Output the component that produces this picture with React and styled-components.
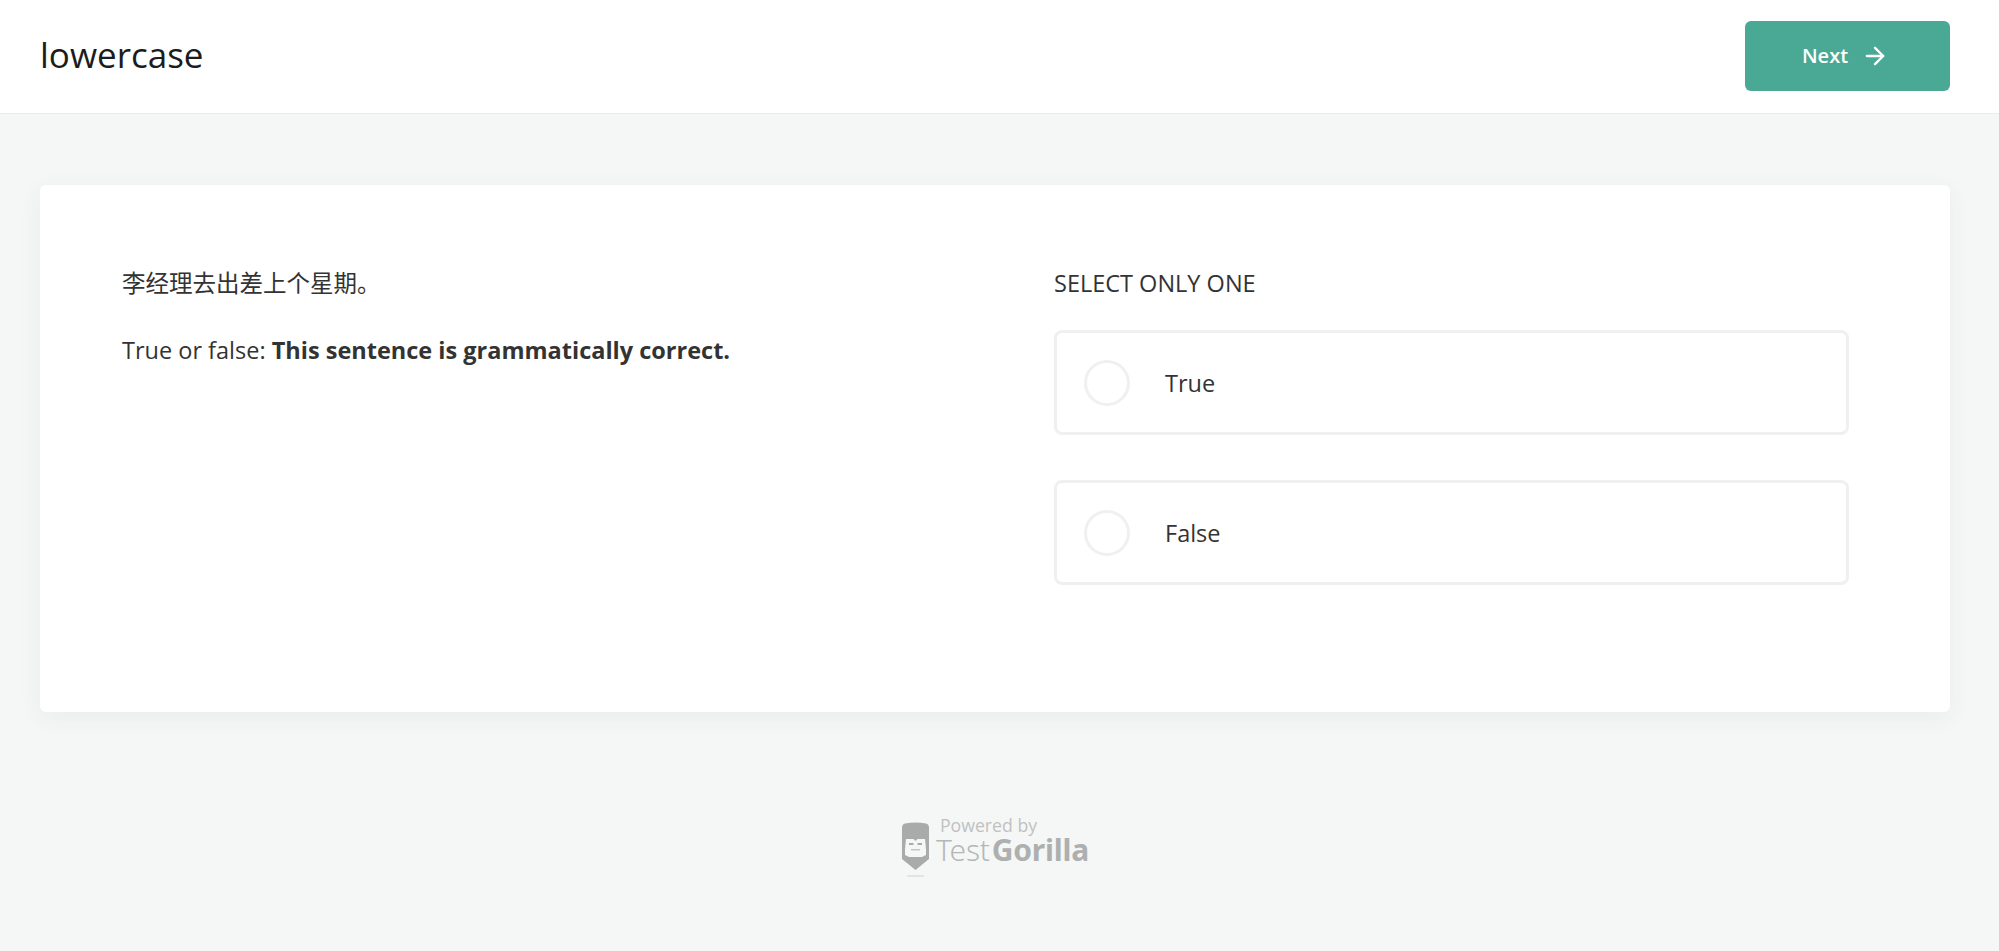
import React from "react";
import styled, { createGlobalStyle } from "styled-components";
import { FiArrowRight } from "react-icons/fi";

const GlobalStyle = createGlobalStyle`
  html, body {
    margin: 0;
    padding: 0;
    background: #f5f7f6;
    font-family: "Open Sans", "Noto Sans CJK SC", sans-serif;
    color: #333;
  }
`;

const Page = styled.div`
  min-height: 951px;
  display: flex;
  flex-direction: column;
`;

const Header = styled.header`
  height: 114px;
  box-sizing: border-box;
  background: #fff;
  border-bottom: 1px solid #e9ebeb;
  display: flex;
  align-items: center;
  justify-content: space-between;
  padding: 0 49px 2px 40px;
`;

const Title = styled.h1`
  margin: 0 0 3px;
  font-size: 35px;
  font-weight: 400;
  color: #1c1c1c;
`;

const NextButton = styled.button`
  width: 205px;
  height: 70px;
  border: 0;
  border-radius: 6px;
  background: #49a994;
  color: #fff;
  font-family: inherit;
  font-size: 20px;
  font-weight: 600;
  display: flex;
  align-items: center;
  justify-content: center;
  gap: 13px;
  padding: 0 4px 0 0;
`;

const Card = styled.main`
  margin: 71px 49px 0 40px;
  height: 527px;
  box-sizing: border-box;
  background: #fff;
  border-radius: 6px;
  box-shadow: 0 6px 24px rgba(40, 60, 60, 0.06);
  padding: 83px 101px 0 82px;
  display: grid;
  grid-template-columns: 932px 1fr;
`;

const Question = styled.section`
  font-size: 23.5px;
  line-height: 30px;
`;

const Paragraph = styled.p`
  margin: 0 0 37px;
`;

const Answers = styled.section`
  display: flex;
  flex-direction: column;
`;

const AnswersLabel = styled.div`
  font-size: 23.5px;
  line-height: 30px;
  margin-bottom: 32px;
`;

const Option = styled.div`
  height: 105px;
  box-sizing: border-box;
  border: 3px solid #eff0f0;
  border-radius: 8px;
  display: flex;
  align-items: center;
  padding-left: 27px;
  margin-bottom: 45px;
  font-size: 23.5px;
`;

const Radio = styled.span`
  width: 46px;
  height: 46px;
  box-sizing: border-box;
  border: 3px solid #eff0f0;
  border-radius: 50%;
  margin-right: 35px;
`;

const Footer = styled.footer`
  margin-top: 104px;
  display: flex;
  justify-content: center;
  align-items: flex-start;
  gap: 7px;
  padding-right: 8px;
`;

const Brand = styled.div`
  display: flex;
  flex-direction: column;
`;

const Powered = styled.span`
  font-size: 17.7px;
  line-height: 19px;
  margin-left: 4px;
  color: #bfc1c1;
`;

const BrandName = styled.span`
  font-family: "Noto Sans", sans-serif;
  font-size: 30px;
  line-height: 30px;
  font-weight: 300;
  letter-spacing: -0.2px;
  color: #b5b7b7;
  b {
    margin-left: 2px;
    font-weight: 700;
    color: #aeb0b0;
  }
`;

const LogoSvg = styled.svg`
  margin-top: 6px;
`;

const GorillaLogo = () => (
  <LogoSvg width="27" height="56" viewBox="0 0 27 56">
    <path d="M3 1.5 Q13.5 -0.5 24 1.5 Q27 2 27 6 V37 L13.5 48 L0 37 V6 Q0 2 3 1.5 Z" fill="#a9abab" />
    <path d="M4 17 H11.5 L13.5 19 L15.5 17 H23 L24 27 V33 L20 35 H7 L3 33 V27 Z" fill="#f5f7f6" />
    <rect x="7" y="21" width="4.5" height="2" fill="#a9abab" />
    <rect x="15.5" y="21" width="4.5" height="2" fill="#a9abab" />
    <rect x="9" y="27" width="9" height="1.5" fill="#c4c6c6" />
    <rect x="5" y="53" width="17" height="2" rx="1" fill="#e2e4e4" />
  </LogoSvg>
);

export default function App() {
  return (
    <Page>
      <GlobalStyle />
      <Header>
        <Title>lowercase</Title>
        <NextButton>
          Next <FiArrowRight size={28} />
        </NextButton>
      </Header>
      <Card>
        <Question>
          <Paragraph>李经理去出差上个星期。</Paragraph>
          <Paragraph>
            True or false: <strong>This sentence is grammatically correct.</strong>
          </Paragraph>
        </Question>
        <Answers>
          <AnswersLabel>SELECT ONLY ONE</AnswersLabel>
          <Option>
            <Radio />
            True
          </Option>
          <Option>
            <Radio />
            False
          </Option>
        </Answers>
      </Card>
      <Footer>
        <GorillaLogo />
        <Brand>
          <Powered>Powered by</Powered>
          <BrandName>
            Test<b>Gorilla</b>
          </BrandName>
        </Brand>
      </Footer>
    </Page>
  );
}
